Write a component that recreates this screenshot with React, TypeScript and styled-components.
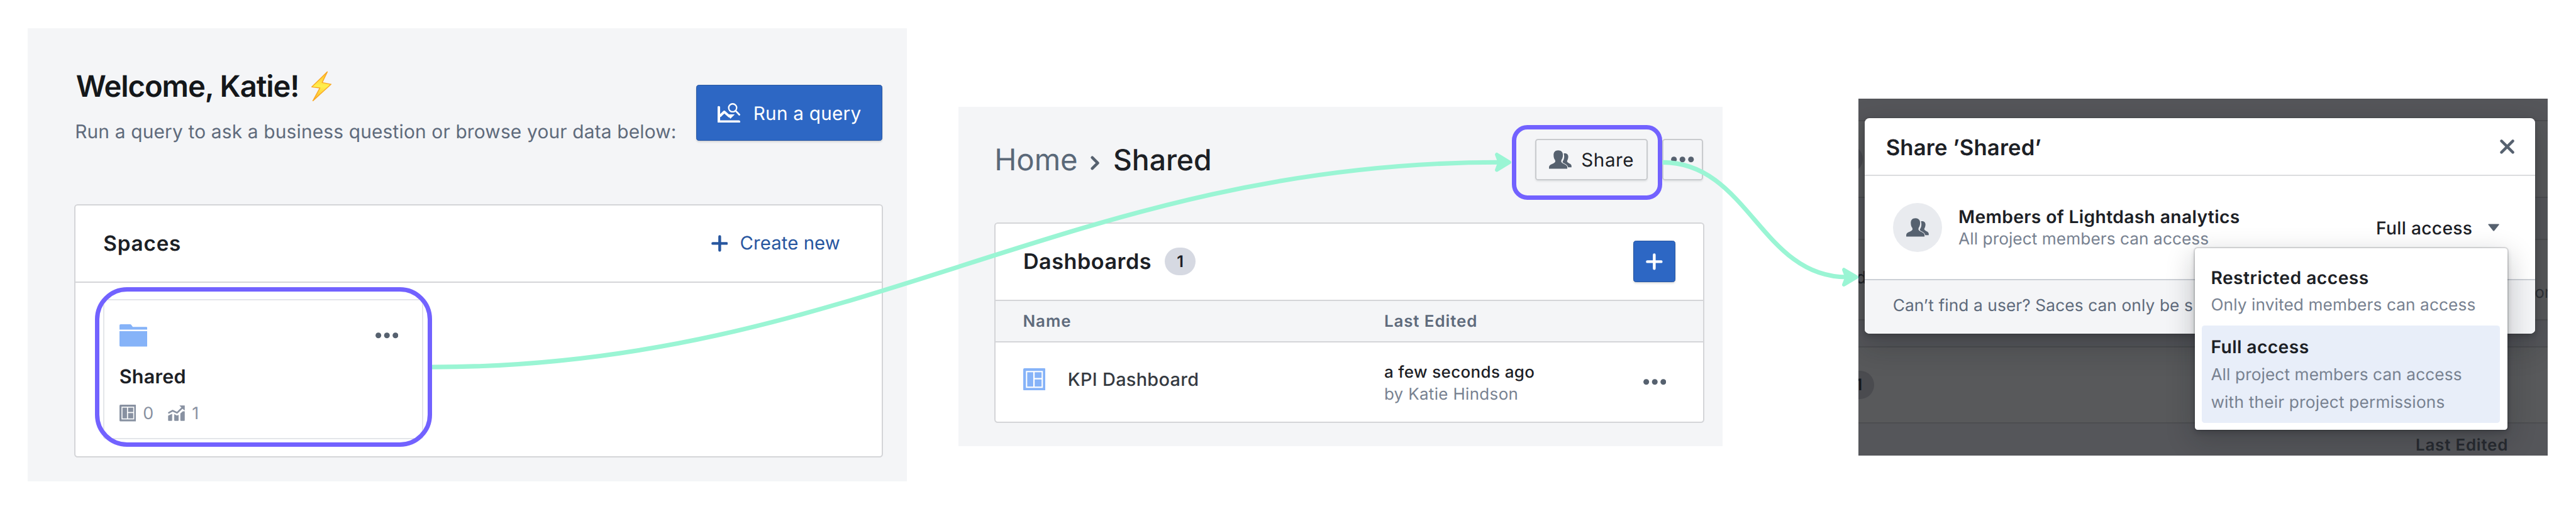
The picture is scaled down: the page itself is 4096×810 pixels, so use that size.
import React from "react";
import styled, { createGlobalStyle, css } from "styled-components";

/* All measures are in design units; the board is drawn at this scale. */
const SCALE = 4096 / 4497;
const u = (n: number) => `${(n * SCALE).toFixed(2)}px`;

const c = {
  panel: "#f4f5f7",
  border: "#d4d5d8",
  ink: "#1c2025",
  slate: "#5f6b7c",
  muted: "#788291",
  icon: "#56616f",
  stat: "#8891a1",
  blue: "#2d67c4",
  blueEdge: "#2856a0",
  link: "#27569f",
  sky: "#86b3f8",
  purple: "#7262ff",
  mint: "#9af5d4",
  badge: "#d6d9e2",
};

const GlobalStyle = createGlobalStyle`
  * { box-sizing: border-box; }
  body {
    margin: 0;
    background: #fff;
    font-family: Inter, "Liberation Sans", sans-serif;
    text-rendering: geometricPrecision;
    overflow: hidden;
  }
  svg { display: block; flex: none; }
`;

const Board = styled.main`
  position: relative;
  display: flex;
  align-items: flex-start;
  width: ${u(4497)};
  height: ${u(889)};
  overflow: hidden;
  background: #fff;
`;

type TextProps = {
  $size: number;
  $weight?: number;
  $track?: number;
  $line?: number;
  $color?: string;
  $top?: number;
};
const Text = styled.span<TextProps>`
  display: block;
  white-space: nowrap;
  font-size: ${(p) => u(p.$size)};
  font-weight: ${(p) => p.$weight ?? 400};
  letter-spacing: ${(p) => p.$track ?? 0}em;
  line-height: ${(p) => u(p.$line ?? 40)};
  color: ${(p) => p.$color ?? c.ink};
  padding-top: ${(p) => u(p.$top ?? 0)};
  transform: translateY(1px);
`;

/* ---------- icons ---------- */

const Glyph = styled.svg<{ $w: number; $h: number }>`
  width: ${(p) => u(p.$w)};
  height: ${(p) => u(p.$h)};
`;

const Bolt = () => (
  <Glyph $w={37} $h={53.5} viewBox="0 0 38 55">
    <defs>
      <linearGradient id="bolt" x1="0" y1="0" x2="0" y2="1">
        <stop offset="0" stopColor="#ffc02e" />
        <stop offset="0.5" stopColor="#fff04f" />
        <stop offset="1" stopColor="#ffb52b" />
      </linearGradient>
    </defs>
    <path
      d="M29.8 1.5 2 28.6 16.6 30.4 4 53.5 36.6 23.8 20.6 20.8Z"
      fill="url(#bolt)"
      stroke="#f9a825"
      strokeWidth="1.6"
      strokeLinejoin="round"
    />
  </Glyph>
);

const QueryIcon = () => (
  <Glyph $w={39.3} $h={34.7} viewBox="37 44 118 104" fill="none" stroke="#fff">
    <path d="M43.5 66V141H149" strokeWidth="13.5" strokeLinecap="round" strokeLinejoin="round" />
    <path d="M48 113 72 90 101 116" strokeWidth="13" strokeLinejoin="round" />
    <path d="M88 103H127L104 126Z" fill="#fff" stroke="none" />
    <circle cx="116" cy="69" r="21" strokeWidth="7.5" />
    <path d="M131 84 151 105" strokeWidth="9" strokeLinecap="round" />
  </Glyph>
);

const Plus = ({ color }: { color: string }) => (
  <Glyph $w={29.4} $h={29.4} viewBox="0 0 30 30">
    <path d="M15 2.7V27.3M2.7 15H27.3" stroke={color} strokeWidth="5" strokeLinecap="round" />
  </Glyph>
);

const Folder = () => (
  <Glyph $w={49} $h={39} viewBox="0 0 49 39" fill={c.sky}>
    <path d="M2 0H18.5Q20 0 20.8 1.3L23.2 4.8H47Q49 4.8 49 6.8V9.4H0V2Q0 0 2 0Z" />
    <path d="M0 12H49V37Q49 39 47 39H2Q0 39 0 37Z" />
  </Glyph>
);

const Dots = () => (
  <Glyph $w={40} $h={10.4} viewBox="0 0 40 10.4" fill={c.icon}>
    <circle cx="5.1" cy="5.2" r="5" />
    <circle cx="20" cy="5.2" r="5" />
    <circle cx="34.9" cy="5.2" r="5" />
  </Glyph>
);

const DashboardIcon = ({ size, color }: { size: number; color: string }) => (
  <Glyph $w={size} $h={size} viewBox="0 0 87 87" fill={color}>
    <rect width="87" height="87" rx="5" />
    <rect x="10.5" y="10.5" width="66" height="66" fill="#fff" />
    <rect x="15.5" y="15.5" width="23.5" height="56" />
    <rect x="44.5" y="15.5" width="27" height="22.5" />
    <rect x="44.5" y="43.5" width="27" height="28" />
  </Glyph>
);

const ChartIcon = () => (
  <Glyph $w={29.4} $h={27.4} viewBox="278 57 88 82" fill={c.stat}>
    <path d="M279 111 300 101V135Q300 138 297 138H282Q279 138 279 135Z" />
    <path d="M311 103 325 110 334 107V135Q334 138 331 138H314Q311 138 311 135Z" />
    <path d="M343 100 356 88H366V135Q366 138 363 138H346Q343 138 343 135Z" />
    <path d="M283 96 302 85 326 96 352 71" fill="none" stroke={c.stat} strokeWidth="8.5" strokeLinecap="round" strokeLinejoin="round" />
    <path d="M338 58H366V84L358 78 346 66Z" />
  </Glyph>
);

const People = () => (
  <Glyph $w={39.3} $h={32.6} viewBox="72 70 118 98" fill={c.icon}>
    <path d="M120 71C136 71 145 80 145 95 145 109 141 117 137 122L136 129C136 134 140 138 150 142 162 147 168 152 168 160V167H72V160C72 151 78 147 90 142 100 138 105 134 105 129L104 122C99 117 96 109 96 95 96 80 105 71 120 71Z" />
    <path d="M149 87C160 84 173 89 173 104 173 114 170 121 167 125V130C170 138 190 140 190 152V160H172C170 149 160 144 149 138 144 136 143 133 144 128 152 118 154 100 149 87Z" />
  </Glyph>
);

const ChevronRight = () => (
  <Glyph $w={16} $h={25} viewBox="0 0 16 25">
    <path d="M3 3 12.6 12.5 3 22" fill="none" stroke={c.icon} strokeWidth="5" strokeLinecap="round" strokeLinejoin="round" />
  </Glyph>
);

const Close = () => (
  <Glyph $w={25.4} $h={25} viewBox="0 0 25 25">
    <path d="M2.6 2.6 22.4 22.4M22.4 2.6 2.6 22.4" stroke={c.icon} strokeWidth="4.8" strokeLinecap="round" />
  </Glyph>
);

const Caret = () => (
  <Glyph $w={20} $h={13.4} viewBox="0 0 20 13.4">
    <path d="M1.2 .6H18.8Q20 .9 19.3 2L11.2 12.2Q10 13.4 8.8 12.2L.7 2Q0 .9 1.2 .6Z" fill={c.icon} />
  </Glyph>
);

/* ---------- shared parts ---------- */

const Panel = styled.section<{ $left: number; $top: number; $w: number; $h: number }>`
  flex: none;
  display: flex;
  flex-direction: column;
  width: ${(p) => u(p.$w)};
  height: ${(p) => u(p.$h)};
  margin: ${(p) => u(p.$top)} 0 0 ${(p) => u(p.$left)};
  background: ${c.panel};
`;

const Card = styled.div<{ $h: number }>`
  flex: none;
  display: flex;
  flex-direction: column;
  height: ${(p) => u(p.$h)};
  border: 2px solid ${c.border};
  border-radius: ${u(6)};
  background: #fff;
`;

const CardHead = styled.div<{ $right: number }>`
  flex: none;
  display: flex;
  align-items: center;
  height: ${u(135)};
  padding: 0 ${(p) => u(p.$right)} 0 ${u(48.4)};
  border-bottom: 2px solid ${c.border};
`;

const Spacer = styled.div`
  flex: 1;
`;

const primary = css`
  display: flex;
  align-items: center;
  border: 1px solid ${c.blueEdge};
  border-radius: ${u(5)};
  background: ${c.blue};
  box-shadow: 0 2px 3px rgba(17, 20, 24, 0.14);
`;

const Badge = styled.div<{ $dim?: boolean; $left: number }>`
  flex: none;
  display: flex;
  align-items: center;
  justify-content: center;
  width: ${u(53.3)};
  height: ${u(48.6)};
  margin-left: ${(p) => u(p.$left)};
  border-radius: ${u(25)};
  background: ${(p) => (p.$dim ? "#4a4b4f" : c.badge)};
`;

const Ring = styled.div<{ $x: number; $y: number; $w: number; $h: number; $r: number }>`
  position: absolute;
  left: ${(p) => u(p.$x)};
  top: ${(p) => u(p.$y)};
  width: ${(p) => u(p.$w)};
  height: ${(p) => u(p.$h)};
  border: 7px solid ${c.purple};
  border-radius: ${(p) => u(p.$r)};
`;

const Connectors = styled.svg`
  position: absolute;
  inset: 0;
  width: 100%;
  height: 100%;
  pointer-events: none;
`;

/* ---------- home panel ---------- */

const HomeBody = styled.div`
  flex: 1;
  display: flex;
  flex-direction: column;
  padding: 0 ${u(41.2)} 0 ${u(81.8)};
`;
const Welcome = styled.header`
  flex: none;
  display: flex;
  align-items: flex-start;
  justify-content: space-between;
  height: ${u(307.7)};
  padding-top: ${u(71.9)};
`;
const Greeting = styled.div`
  display: flex;
  flex-direction: column;
  gap: ${u(28.3)};
  padding-left: ${u(1)};
`;
const GreetingTitle = styled.div`
  display: flex;
  align-items: center;
  gap: ${u(20.5)};
  height: ${u(60)};
  padding-left: ${u(1.8)};
`;
const RunButton = styled.div`
  ${primary}
  gap: ${u(23.2)};
  width: ${u(324)};
  height: ${u(97.4)};
  margin: ${u(27.4)} ${u(2)} 0 0;
  padding-left: ${u(35.6)};
`;
const CreateNew = styled.div`
  display: flex;
  align-items: center;
  gap: ${u(21)};
`;
const SpaceTile = styled.div`
  display: flex;
  flex-direction: column;
  width: ${u(558)};
  height: ${u(245)};
  margin: ${u(28.5)} 0 0 ${u(48.5)};
  padding: ${u(42.3)} ${u(41.4)} 0 ${u(25.6)};
  border: 2px solid #e4e6ea;
  border-radius: ${u(5)};
`;
const TileTop = styled.div`
  display: flex;
  align-items: center;
  justify-content: space-between;
  margin-bottom: ${u(32.2)};
`;
const Stats = styled.div`
  display: flex;
  align-items: center;
  gap: ${u(25.6)};
  height: ${u(29.4)};
  margin-top: ${u(29.2)};
`;
const Stat = styled.div`
  display: flex;
  align-items: center;
  gap: ${u(12)};
`;

const HomePanel = () => (
  <Panel $left={48} $top={49} $w={1535} $h={792}>
    <HomeBody>
      <Welcome>
        <Greeting>
          <GreetingTitle>
            <Text $size={51.8} $weight={600} $track={-0.0228} $line={60} $color="#14171a">Welcome, Katie!</Text>
            <Bolt />
          </GreetingTitle>
          <Text $size={32.8} $track={0.0055} $color={c.slate}>
            Run a query to ask a business question or browse your data below:
          </Text>
        </Greeting>
        <RunButton>
          <QueryIcon />
          <Text $size={32.6} $track={0.0083} $top={1.6} $color="#fff">Run a query</Text>
        </RunButton>
      </Welcome>
      <Card $h={442.3}>
        <CardHead $right={73}>
          <Text $size={36.5} $weight={600} $track={0.024}>Spaces</Text>
          <Spacer />
          <CreateNew>
            <Plus color={c.link} />
            <Text $size={32.2} $track={0.003} $color={c.link}>Create new</Text>
          </CreateNew>
        </CardHead>
        <SpaceTile>
          <TileTop>
            <Folder />
            <Dots />
          </TileTop>
          <Text $size={33.5} $weight={600} $track={0.0084}>Shared</Text>
          <Stats>
            <Stat>
              <DashboardIcon size={29.2} color={c.stat} />
              <Text $size={29.5} $color={c.stat}>0</Text>
            </Stat>
            <Stat>
              <ChartIcon />
              <Text $size={29.5} $color={c.stat}>1</Text>
            </Stat>
          </Stats>
        </SpaceTile>
      </Card>
    </HomeBody>
  </Panel>
);

/* ---------- space panel ---------- */

const SpaceBody = styled.div`
  padding: 0 ${u(31.7)} 0 ${u(62.6)};
`;
const SpaceHead = styled.header`
  display: flex;
  align-items: flex-start;
  height: ${u(201.3)};
  padding: ${u(55.4)} ${u(2)} 0 0;
`;
const Breadcrumbs = styled.nav`
  display: flex;
  align-items: center;
  height: ${u(73.2)};
  padding-left: ${u(0.5)};
`;
const CrumbArrow = styled.div`
  margin: ${u(11)} ${u(24)} 0 ${u(22)};
`;
const OutlineButton = styled.div<{ $w: number; $left?: number }>`
  display: flex;
  align-items: center;
  justify-content: center;
  gap: ${u(17.2)};
  width: ${(p) => u(p.$w)};
  height: ${u(73.2)};
  margin-left: ${(p) => u(p.$left ?? 0)};
  border: 2px solid #c9cbce;
  border-radius: ${u(5)};
  box-shadow: 0 2px 3px rgba(17, 20, 24, 0.08);
`;
const AddButton = styled.div`
  ${primary}
  justify-content: center;
  width: ${u(73.2)};
  height: ${u(73.2)};
`;
const columns = css`
  display: grid;
  grid-template-columns: ${u(630.6)} 1fr auto;
  align-items: center;
  padding: 0 ${u(64.5)} 0 ${u(48)};
`;
const TableHead = styled.div`
  ${columns}
  height: ${u(73.2)};
  background: ${c.panel};
  border-bottom: 2px solid ${c.border};
`;
const TableRow = styled.div`
  ${columns}
  flex: 1;
`;
const NameCell = styled.div`
  display: flex;
  align-items: center;
  gap: ${u(39.3)};
  padding-bottom: ${u(10)};
`;
const EditedCell = styled.div`
  padding-top: ${u(4)};
`;

const SpacePanel = () => (
  <Panel $left={90} $top={187} $w={1333.9} $h={592.7}>
    <SpaceBody>
      <SpaceHead>
        <Breadcrumbs>
          <Text $size={52} $track={-0.002} $line={60} $color="#5a6878">Home</Text>
          <CrumbArrow>
            <ChevronRight />
          </CrumbArrow>
          <Text $size={50.8} $weight={500} $track={-0.001} $line={60}>Shared</Text>
        </Breadcrumbs>
        <Spacer />
        <OutlineButton $w={196}>
          <People />
          <Text $size={32.5} $track={0.02}>Share</Text>
        </OutlineButton>
        <OutlineButton $w={72} $left={25}>
          <Dots />
        </OutlineButton>
      </SpaceHead>
      <Card $h={350.7}>
        <CardHead $right={48.5}>
          <Text $size={37.5} $weight={600} $track={0.0154}>Dashboards</Text>
          <Badge $left={23.3}>
            <Text $size={28} $weight={600}>1</Text>
          </Badge>
          <Spacer />
          <AddButton>
            <Plus color="#fff" />
          </AddButton>
        </CardHead>
        <TableHead>
          <Text $size={28.5} $weight={600} $track={0.034} $color={c.slate}>Name</Text>
          <Text $size={28.5} $weight={600} $track={0.034} $color={c.slate}>Last Edited</Text>
        </TableHead>
        <TableRow>
          <NameCell>
            <DashboardIcon size={39} color={c.sky} />
            <Text $size={31.7} $weight={500} $track={0.0108} $color="#353a41">KPI Dashboard</Text>
          </NameCell>
          <EditedCell>
            <Text $size={28.5} $weight={500} $track={0.0145} $line={38}>a few seconds ago</Text>
            <Text $size={28.5} $track={0.0131} $line={38} $color={c.muted}>by Katie Hindson</Text>
          </EditedCell>
          <Dots />
        </TableRow>
      </Card>
    </SpaceBody>
  </Panel>
);

/* ---------- share dialog panel ---------- */

const Scene = styled(Panel)`
  position: relative;
  overflow: hidden;
  background: #55565a;
`;
const Band = styled.div<{ $h: number; $light?: boolean; $last?: boolean }>`
  flex: none;
  display: flex;
  align-items: center;
  justify-content: space-between;
  height: ${(p) => u(p.$h)};
  background: ${(p) => (p.$light ? "#58595b" : "#55565a")};
  border-bottom: ${(p) => (p.$last ? "0" : "2px solid #4c4d50")};
`;
const CutName = styled.div`
  margin-left: ${u(-4)};
  padding-bottom: ${u(8)};
`;
const CutAuthor = styled.div`
  width: ${u(22.5)};
  padding-top: ${u(44)};
`;
const LastEdited = styled.div`
  margin-left: auto;
  padding: ${u(4)} ${u(68.5)} 0 0;
`;

const Dialog = styled.div`
  position: absolute;
  left: ${u(11.6)};
  top: ${u(34.9)};
  display: flex;
  flex-direction: column;
  width: ${u(1170.2)};
  height: ${u(375.9)};
  border-radius: ${u(8)};
  background: #fff;
  box-shadow: 0 0 0 1px rgba(17, 20, 24, 0.12), 0 4px 8px rgba(17, 20, 24, 0.22),
    0 18px 46px 6px rgba(17, 20, 24, 0.2);
`;
const DialogHead = styled.div`
  display: flex;
  align-items: center;
  justify-content: space-between;
  height: ${u(100.8)};
  padding: 0 ${u(36)} 0 ${u(36.7)};
  border-bottom: 2px solid #dcdddf;
`;
const DialogBody = styled.div`
  display: flex;
  align-items: center;
  height: ${u(182.6)};
  padding: 0 ${u(63)} 0 ${u(49.1)};
  border-bottom: 2px solid #ccd0d6;
`;
const Avatar = styled.div`
  display: flex;
  align-items: center;
  justify-content: center;
  width: ${u(86)};
  height: ${u(86)};
  margin-right: ${u(28.3)};
  border-radius: 50%;
  background: #e9ebef;
`;
const AccessPicker = styled.div`
  display: flex;
  align-items: center;
  gap: ${u(26.6)};
`;
const DialogFoot = styled.div`
  flex: 1;
  display: flex;
  align-items: center;
  padding: 0 0 ${u(5)} ${u(48.7)};
  border-radius: 0 0 ${u(8)} ${u(8)};
  background: ${c.panel};
`;
const Menu = styled.div`
  position: absolute;
  left: ${u(575.7)};
  top: ${u(227.4)};
  width: ${u(546.3)};
  height: ${u(317)};
  padding: ${u(13)};
  border-radius: ${u(5)};
  background: #fff;
  box-shadow: 0 0 0 2px rgba(17, 20, 24, 0.12), 0 4px 8px rgba(17, 20, 24, 0.2),
    0 14px 44px 4px rgba(17, 20, 24, 0.2);
`;
const MenuItem = styled.div<{ $active?: boolean }>`
  padding: ${u(13)} ${u(15.3)} ${u(11.8)};
  border-radius: ${u(5)};
  background: ${(p) => (p.$active ? "#e8eef9" : "transparent")};
`;

const SharePanel = () => (
  <Scene $left={237.1} $top={171.9} $w={1203.2} $h={624.1}>
    <Band $h={40.2} />
    <Band $h={134.3} $light>
      <Badge $left={-45} $dim />
    </Band>
    <Band $h={72.7} />
    <Band $h={140.7} $light>
      <CutName>
        <Text $size={30} $weight={500} $color="#202328">d</Text>
      </CutName>
      <CutAuthor>
        <Text $size={28.5} $color="#2f3237">or</Text>
      </CutAuthor>
    </Band>
    <Band $h={47.1} />
    <Band $h={133.5} $light>
      <Badge $left={-25.3} $dim>
        <Text $size={28} $weight={600} $color="#15181c">1</Text>
      </Badge>
    </Band>
    <Band $h={70} $last>
      <LastEdited>
        <Text $size={28.5} $weight={600} $track={0.03} $color="#272a30">Last Edited</Text>
      </LastEdited>
    </Band>
    <Dialog>
      <DialogHead>
        <Text $size={38} $weight={600} $track={0.005} $top={3}>Share ’Shared’</Text>
        <Close />
      </DialogHead>
      <DialogBody>
        <Avatar>
          <People />
        </Avatar>
        <div>
          <Text $size={31} $weight={600} $track={0.0123} $line={39}>Members of Lightdash analytics</Text>
          <Text $size={28.8} $track={0.0026} $line={39} $color={c.muted}>All project members can access</Text>
        </div>
        <Spacer />
        <AccessPicker>
          <Text $size={31} $weight={500} $track={0.0103}>Full access</Text>
          <Caret />
        </AccessPicker>
      </DialogBody>
      <DialogFoot>
        <Text $size={28.8} $track={0.0048} $color={c.slate}>Can’t find a user? Saces can only be s</Text>
      </DialogFoot>
      <Menu>
        <MenuItem>
          <Text $size={31} $weight={600} $track={0.0165} $line={48.4}>Restricted access</Text>
          <Text $size={28.8} $track={0.0039} $line={48.6} $color={c.muted}>Only invited members can access</Text>
        </MenuItem>
        <MenuItem $active>
          <Text $size={31} $weight={600} $track={0.0145} $line={48}>Full access</Text>
          <Text $size={28.8} $track={0.004} $line={48.6} $color={c.muted}>All project members can access</Text>
          <Text $size={28.8} $track={0.0078} $line={48.6} $color={c.muted}>with their project permissions</Text>
        </MenuItem>
      </Menu>
    </Dialog>
  </Scene>
);

/* ---------- board ---------- */

export default function App() {
  return (
    <>
      <GlobalStyle />
      <Board>
        <HomePanel />
        <SpacePanel />
        <SharePanel />
        <Ring $x={166} $y={502} $w={588.3} $h={278.7} $r={56} />
        <Ring $x={2639} $y={218.2} $w={263.2} $h={130.5} $r={27} />
        <Connectors viewBox="0 0 4497 889" preserveAspectRatio="none" fill="none" stroke={c.mint} strokeLinejoin="round">
          <path d="M754.3 641.3C1497 641.3 1872 283.5 2618 283.5" strokeWidth="7.8" />
          <path d="M2635 283.5 2613 270 2618 283.5 2613 297Z" fill={c.mint} strokeWidth="6.4" />
          <path d="M2902.4 283.7C3052 283.7 3074 484.2 3224 484.2" strokeWidth="7.8" />
          <path d="M3241 484.3 3219 471.2 3224 484.3 3219 497.4Z" fill={c.mint} strokeWidth="6.4" />
        </Connectors>
      </Board>
    </>
  );
}
